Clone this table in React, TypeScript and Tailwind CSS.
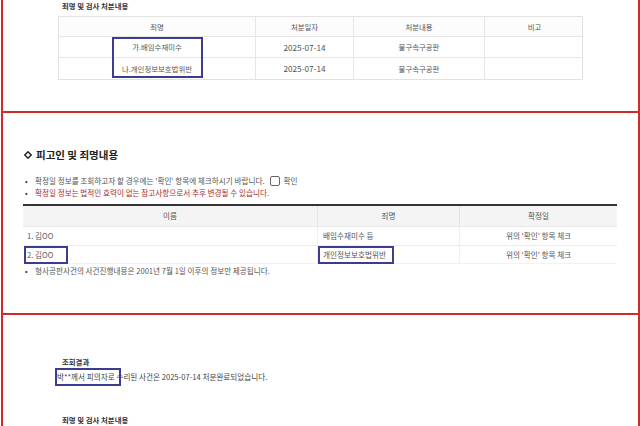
import React from "react";

const RED = "border-[#d22a2a]";

function BlueBox({ className }: { className: string }) {
  return <div className={`absolute border-2 border-[#3d3d8f] pointer-events-none ${className}`} />;
}

function Diamond() {
  return (
    <svg width="8" height="8" viewBox="0 0 8 8" className="shrink-0">
      <path d="M4 0.8 L7.2 4 L4 7.2 L0.8 4 Z" fill="none" stroke="#222" strokeWidth="1.4" />
    </svg>
  );
}

export default function App() {
  return (
    <div className="w-[640px] h-[426px] overflow-hidden bg-white text-[#555] font-['Noto_Sans_CJK_KR','Noto_Sans',sans-serif]">
      {/* Panel 1 */}
      <section className={`ml-[1px] w-[639px] h-[113px] border-x-2 border-b-2 ${RED} pl-[55px]`}>
        <div className="pl-[4px] h-[12px] leading-[12px] text-[7.4px] font-bold text-[#333]">죄명 및 검사 처분내용</div>
        <div className="relative mt-[4px] w-[525px] border border-[#e2e2e2] text-[7.4px] text-[#555]">
          <div className="grid grid-cols-[197px_98px_131px_99px] h-[20px] bg-[#fcfcfc] border-b border-[#e6e6e6]">
            <div className="flex items-center justify-center border-r border-[#e6e6e6]">죄명</div>
            <div className="flex items-center justify-center border-r border-[#e6e6e6]">처분일자</div>
            <div className="flex items-center justify-center border-r border-[#e6e6e6]">처분내용</div>
            <div className="flex items-center justify-center">비고</div>
          </div>
          <div className="grid grid-cols-[197px_98px_131px_99px] h-[21px] border-b border-[#e6e6e6]">
            <div className="flex items-center justify-center border-r border-[#e6e6e6]">가.배임수재미수</div>
            <div className="flex items-center justify-center border-r border-[#e6e6e6] text-[8.2px]">2025-07-14</div>
            <div className="flex items-center justify-center border-r border-[#e6e6e6]">불구속구공판</div>
            <div />
          </div>
          <div className="grid grid-cols-[197px_98px_131px_99px] h-[21px]">
            <div className="flex items-center justify-center border-r border-[#e6e6e6]">나.개인정보보호법위반</div>
            <div className="flex items-center justify-center border-r border-[#e6e6e6] text-[8.2px]">2025-07-14</div>
            <div className="flex items-center justify-center border-r border-[#e6e6e6]">불구속구공판</div>
            <div />
          </div>
          <BlueBox className="left-[53px] top-[20px] w-[91px] h-[41px]" />
        </div>
      </section>

      {/* Panel 2 */}
      <section className={`ml-[1px] w-[639px] h-[202px] border-x-2 border-b-2 ${RED} pl-[20px] pt-[35px]`}>
        <div className="flex items-center h-[14px] pl-[1px]">
          <Diamond />
          <span className="ml-[4px] text-[10.5px] leading-[14px] font-bold text-[#222]">피고인 및 죄명내용</span>
        </div>
        <div className="mt-[13px] text-[7.6px] leading-[12px]">
          <div className="flex items-center h-[12px]">
            <span className="w-[12px] pl-[2px] text-[#333]">•</span>
            <span>확정일 정보를 조회하고자 할 경우에는 '확인' 항목에 체크하시기 바랍니다.</span>
            <span className="ml-[5px] w-[10px] h-[10px] rounded-[2px] border border-[#666] bg-white" />
            <span className="ml-[4px]">확인</span>
          </div>
          <div className="flex items-center h-[12px] text-[#a82c2c]">
            <span className="w-[12px] pl-[2px] text-[#333]">•</span>
            <span>확정일 정보는 법적인 효력이 없는 참고사항으로서 추후 변경될 수 있습니다.</span>
          </div>
        </div>
        <div className="mt-[5px] w-[594px] border-t-2 border-[#333] text-[7.6px]">
          <div className="grid grid-cols-[295px_142px_157px] h-[21px] bg-[#f4f4f4] border-b border-[#e8e8e8]">
            <div className="flex items-center justify-center border-r border-[#e4e4e4]">이름</div>
            <div className="flex items-center justify-center border-r border-[#e4e4e4]">죄명</div>
            <div className="flex items-center justify-center">확정일</div>
          </div>
          <div className="grid grid-cols-[295px_142px_157px] h-[19px] border-b border-[#ececec]">
            <div className="flex items-center pl-[4px] border-r border-[#f0f0f0]">1. 김OO</div>
            <div className="flex items-center pl-[5px] border-r border-[#f0f0f0]">배임수재미수 등</div>
            <div className="flex items-center justify-center">위의 '확인' 항목 체크</div>
          </div>
          <div className="grid grid-cols-[295px_142px_157px] h-[18px] border-b border-[#f2f2f2]">
            <div className="relative flex items-center pl-[4px] border-r border-[#f0f0f0]">
              2. 김OO
              <BlueBox className="left-[1px] top-0 w-[44px] h-[18px]" />
            </div>
            <div className="relative flex items-center pl-[5px] border-r border-[#f0f0f0]">
              개인정보보호법위반
              <BlueBox className="left-0 top-0 w-[76px] h-[18px]" />
            </div>
            <div className="flex items-center justify-center">위의 '확인' 항목 체크</div>
          </div>
        </div>
        <div className="mt-[1px] flex items-center h-[12px] text-[7.6px]">
          <span className="w-[12px] pl-[2px] text-[#333]">•</span>
          <span>형사공판사건의 사건진행내용은 2001년 7월 1일 이후의 정보만 제공됩니다.</span>
        </div>
      </section>

      {/* Panel 3 */}
      <section className={`ml-[1px] w-[639px] h-[200px] border-x-2 ${RED} pl-[52px] pt-[41px]`}>
        <div className="pl-[7px] h-[12px] leading-[12px] text-[7.4px] font-bold text-[#333]">조회결과</div>
        <div className="relative mt-[3px] h-[12px] leading-[12px] text-[7.6px] text-[#444] pl-[2px]">
          박**께서 피의자로 수리된 사건은 2025-07-14 처분완료되었습니다.
          <BlueBox className="left-0 top-[-3px] w-[66px] h-[18px]" />
        </div>
        <div className="mt-[31px] pl-[7px] h-[12px] leading-[12px] text-[7.4px] font-bold text-[#333]">죄명 및 검사 처분내용</div>
      </section>
    </div>
  );
}
